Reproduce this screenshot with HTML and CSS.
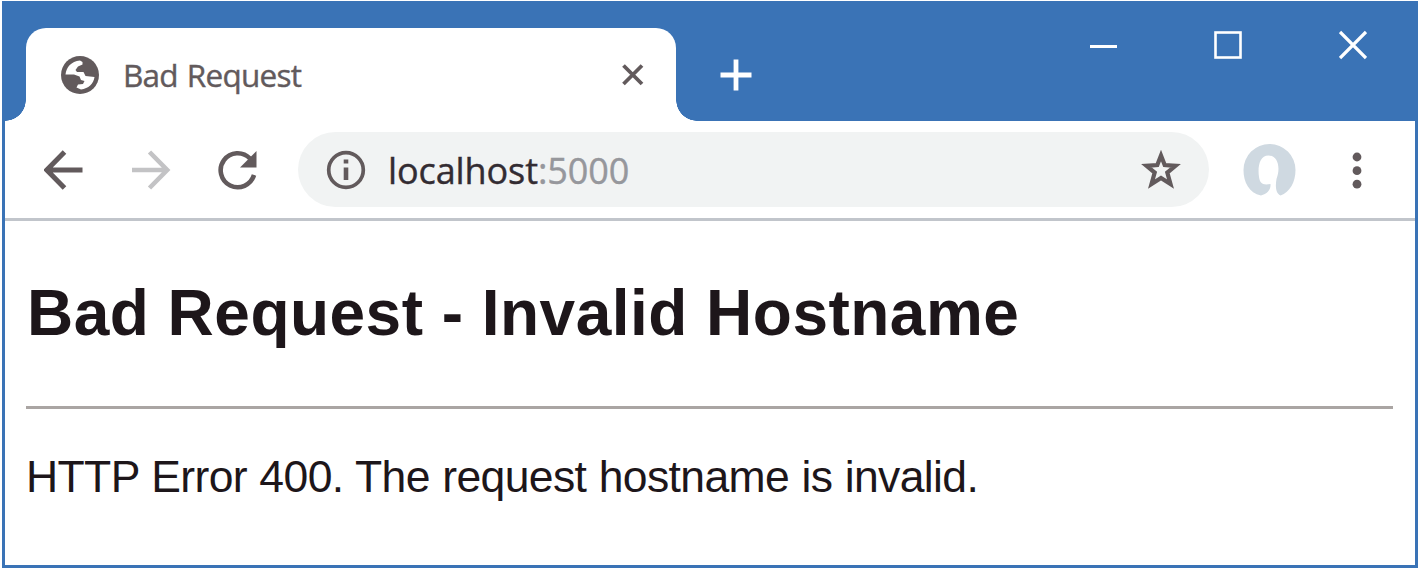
FILE: index.html
```html
<!DOCTYPE html>
<html lang="en">
<head>
<meta charset="utf-8">
<title>Bad Request</title>
<link rel="stylesheet" href="styles.css">
</head>
<body>
<div class="window">
  <header class="titlebar">
    <div class="tab">
      <svg class="globe" width="40" height="40" viewBox="0 0 40 40">
        <circle cx="20" cy="20" r="19" fill="#625a5c"/>
        <path fill="#fff" d="M5.500 19.500C6.500 12 11 6.500 20 5.500L22.500 7V9.500L18 11.500L15.500 15L17 17L23.500 17L25.500 21L34.500 22C33.500 29 28.500 33.500 21 34.500L16.500 32.500L18 29.500L23 29L24.500 26L21 25L19.500 21.500L14 19.500Z"/>
      </svg>
      <span class="tab-title">Bad Request</span>
      <svg class="tab-close" width="26" height="26" viewBox="0 0 26 26"><path d="M3.500 3.500 22 22M22 3.500 3.500 22" stroke="#625a5c" stroke-width="3.800"/></svg>
    </div>
    <svg class="new-tab" width="34" height="34" viewBox="0 0 34 34"><path d="M17 1.500V32.500M1.500 17H32.500" stroke="#fff" stroke-width="4.800"/></svg>
    <div class="controls">
      <svg width="28" height="30" viewBox="0 0 28 30"><path d="M1 16.500H28" stroke="#fff" stroke-width="3"/></svg>
      <svg width="28" height="30" viewBox="0 0 28 30"><rect x="1.500" y="2.500" width="25" height="25" fill="none" stroke="#fff" stroke-width="2.600"/></svg>
      <svg width="28" height="30" viewBox="0 0 28 30"><path d="M1 2 27 28M27 2 1 28" stroke="#fff" stroke-width="3.300"/></svg>
    </div>
  </header>
  <nav class="toolbar">
    <svg class="back" width="40" height="40" viewBox="0 0 40 40"><path d="M38.500 20H4M20.500 2 2.800 20 20.500 38" fill="none" stroke="#625a5c" stroke-width="5"/></svg>
    <svg class="forward" width="40" height="40" viewBox="0 0 40 40"><path d="M1 20H36M18.500 2 36.200 20 18.500 38" fill="none" stroke="#c3c3c5" stroke-width="4.600"/></svg>
    <svg class="reload" width="40" height="40" viewBox="0 0 40 40"><path d="M36 25A17 17 0 1 1 32 8.500" fill="none" stroke="#625a5c" stroke-width="4.600"/><path d="M38.500 1V17.500H22Z" fill="#625a5c"/></svg>
    <div class="address">
      <svg class="info" width="40" height="40" viewBox="0 0 40 40"><circle cx="20" cy="20" r="17.300" fill="none" stroke="#625a5c" stroke-width="3.700"/><path d="M20 9.500V13.500M20 17.500V30" stroke="#625a5c" stroke-width="4.600"/></svg>
      <span class="url">localhost<span class="port">:5000</span></span>
      <svg class="star" width="40" height="40" viewBox="0 0 40 40"><path d="M20 5.500 23.700 15 34.500 15.800 26.300 22.500 29.500 34 20 28 10.500 34 13.700 22.500 5.500 15.800 16.300 15Z" fill="none" stroke="#625a5c" stroke-width="4.200"/></svg>
    </div>
    <svg class="avatar" width="56" height="56" viewBox="0 0 56 56"><path d="M20 53.500C8 51 2.500 40 2.500 28A26 26 0 0 1 54.500 28C54.500 40 49 50 39.500 53.500C34 51 34.500 43 35.500 37C40 25 36.500 13.500 27.500 13.500C18.500 13.500 16.500 25 18 35C19 41 21 43.500 29.500 42C30 48 26 52 20 53.500Z" fill="#cfd9e1"/></svg>
    <svg class="menu" width="10" height="40" viewBox="0 0 10 40"><g fill="#625a5c"><circle cx="5" cy="7" r="4.400"/><circle cx="5" cy="20.700" r="4.400"/><circle cx="5" cy="34.200" r="4.400"/></g></svg>
  </nav>
  <main class="page">
    <h2>Bad Request - Invalid Hostname</h2>
    <hr>
    <p>HTTP Error 400. The request hostname is invalid.</p>
  </main>
</div>
</body>
</html>
```
FILE: styles.css
```css
* { box-sizing: border-box; }

body {
  margin: 0;
  padding: 1px 2px;
  height: 570px;
  background: #fff;
  overflow: hidden;
}

svg { display: block; flex: none; }

.window {
  height: 567px;
  border: 3px solid #3a73b6;
  background: #fff;
}

.titlebar {
  display: flex;
  height: 117px;
  padding: 24px 48px 0 21px;
  background: #3a73b6;
}

.tab {
  position: relative;
  display: flex;
  align-items: center;
  width: 650px;
  height: 93px;
  padding: 0 30px 0 34px;
  background: #fff;
  border-radius: 20px 20px 0 0;
}

.tab::before,
.tab::after {
  content: "";
  position: absolute;
  bottom: 0;
  width: 21px;
  height: 21px;
}

.tab::before {
  right: 100%;
  background: radial-gradient(circle at 0 0, transparent 20.5px, #fff 21px);
}

.tab::after {
  left: 100%;
  background: radial-gradient(circle at 100% 0, transparent 20.5px, #fff 21px);
}

.globe { margin-right: 23px; }

.tab-title,
.url {
  font-family: "Open Sans", "Noto Sans", sans-serif;
  white-space: nowrap;
}

.tab-title {
  font-size: 31.5px;
  letter-spacing: -0.75px;
  word-spacing: 1.5px;
  color: #625a5c;
  -webkit-text-stroke: 0.4px #625a5c;
}

.tab-close { margin-left: auto; }

.new-tab { margin: 30px 0 0 43px; }

.controls {
  display: flex;
  gap: 97px;
  margin-left: auto;
  margin-top: 2px;
}

.toolbar {
  display: flex;
  align-items: center;
  height: 100px;
  padding-left: 39px;
  border-bottom: 3px solid #c1c5cb;
}

.forward { margin-left: 47px; }
.reload { margin-left: 47px; }

.address {
  display: flex;
  align-items: center;
  width: 911px;
  height: 75px;
  margin-left: 40px;
  padding: 0 28px;
  border-radius: 38px;
  background: #f1f3f3;
}

.url {
  margin-left: 22px;
  padding-top: 2px;
  font-size: 36px;
  letter-spacing: -0.1px;
  color: #332c32;
  -webkit-text-stroke: 0.4px;
}

.port { color: #96979c; }
.star { margin-left: auto; }
.avatar { margin-left: 32px; }
.menu { margin-left: 55px; }

.page {
  padding: 54px 22px 0;
  font-family: "Liberation Sans", Arial, sans-serif;
  color: #1d161a;
  white-space: nowrap;
}

h2 {
  margin: 0;
  font-size: 64px;
  line-height: 76px;
  letter-spacing: 0.48px;
}

hr {
  height: 3px;
  margin: 55px 0 0 -1px;
  border: 0;
  background: #aaa5a3;
}

p {
  margin: 41px 0 0 -1px;
  font-size: 44.5px;
  line-height: 54px;
  letter-spacing: -0.62px;
  word-spacing: 0.6px;
}
```
